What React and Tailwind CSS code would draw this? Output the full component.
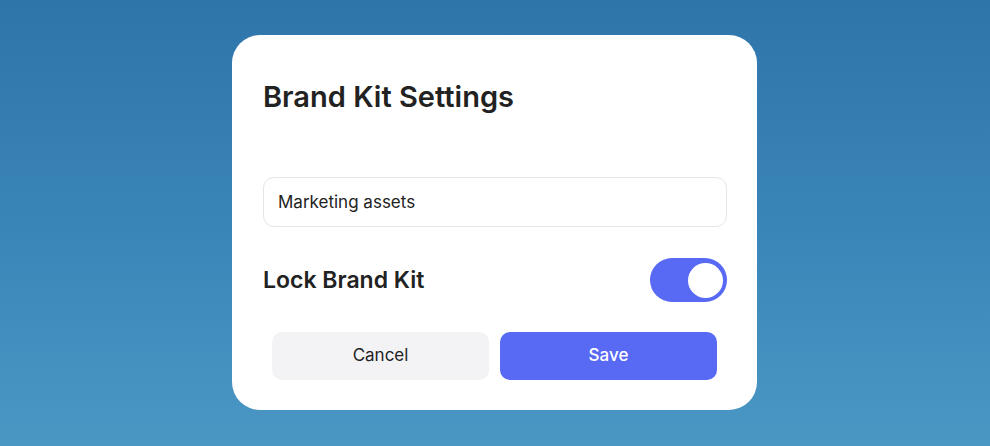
// Brand Kit settings dialog over a blue backdrop
import { useState } from "react";

export default function App() {
  const [name, setName] = useState("Marketing assets");
  const [locked, setLocked] = useState(true);

  return (
    <div
      className="w-[990px] h-[446px] flex justify-start pl-[232px] pt-[35px] bg-gradient-to-b from-[#2e75aa] via-[#3a85b8] to-[#4a97c4]"
      style={{ fontFamily: "Inter, 'Noto Sans', sans-serif" }}
    >
      <div className="w-[525px] h-[375px] bg-white rounded-[28px] pl-[31px] pr-[30px] pt-[44px] pb-[30px] flex flex-col">
        <h2 className="text-[29px] leading-[35px] font-semibold text-[#222222]">
          Brand Kit Settings
        </h2>

        <input
          value={name}
          onChange={e => setName(e.target.value)}
          className="mt-[63px] h-[50px] w-full rounded-[11px] border border-[#e4e5e8] px-[14px] text-[17px] text-[#222222] outline-none"
        />

        <div className="mt-[31px] flex items-center justify-between">
          <span className="text-[23px] font-semibold text-[#222222]">Lock Brand Kit</span>
          <button
            onClick={() => setLocked(v => !v)}
            className={`w-[77px] h-[44px] rounded-full p-[4px] flex items-center ${locked ? "bg-[#5869f4] justify-end" : "bg-gray-300 justify-start"}`}
          >
            <span className="w-[35px] h-[35px] rounded-full bg-white block" />
          </button>
        </div>

        <div className="mt-auto flex gap-[11px] pl-[9px] pr-[10px]">
          <button className="flex-1 h-[48px] rounded-[10px] bg-[#f3f3f5] text-[17px] text-[#222222]">
            Cancel
          </button>
          <button className="flex-1 h-[48px] rounded-[10px] bg-[#5869f4] text-[17px] font-medium text-white">
            Save
          </button>
        </div>
      </div>
    </div>
  );
}
